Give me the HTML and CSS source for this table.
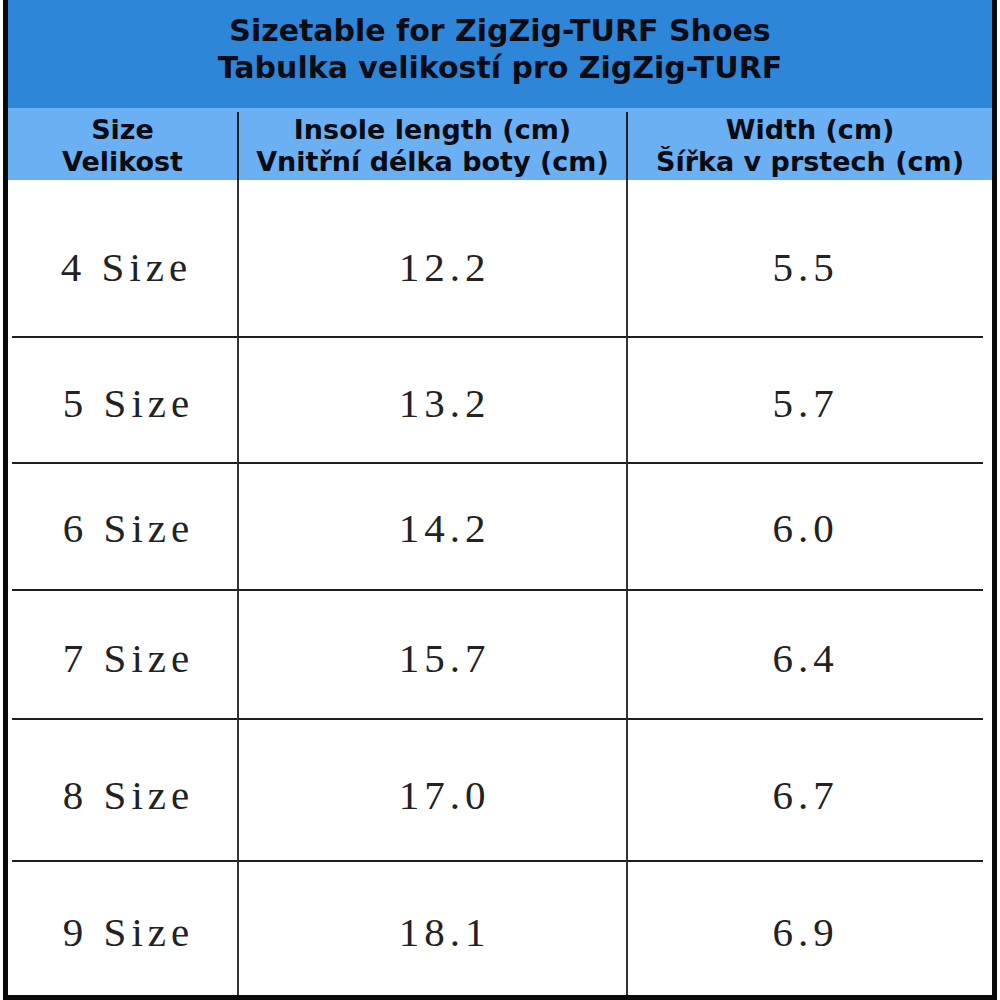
FILE: index.html
```html
<!DOCTYPE html>
<html>
<head>
<meta charset="utf-8">
<link rel="stylesheet" href="styles.css">
</head>
<body>
<div class="frame">
  <div class="title">
    <div>Sizetable for ZigZig-TURF Shoes</div>
    <div>Tabulka velikostí pro ZigZig-TURF</div>
  </div>
  <div class="grid head">
    <div class="hcell c1"><div>Size</div><div>Velikost</div></div>
    <div class="hcell c2"><div>Insole length (cm)</div><div>Vnitřní délka boty (cm)</div></div>
    <div class="hcell c3"><div>Width (cm)</div><div>Šířka v prstech (cm)</div></div>
  </div>
  <div class="grid row r1">
    <div class="cell c1">4 Size</div><div class="cell c2">12.2</div><div class="cell c3">5.5</div>
  </div>
  <div class="grid row r2">
    <div class="cell c1">5 Size</div><div class="cell c2">13.2</div><div class="cell c3">5.7</div>
  </div>
  <div class="grid row r3">
    <div class="cell c1">6 Size</div><div class="cell c2">14.2</div><div class="cell c3">6.0</div>
  </div>
  <div class="grid row r4">
    <div class="cell c1">7 Size</div><div class="cell c2">15.7</div><div class="cell c3">6.4</div>
  </div>
  <div class="grid row r5">
    <div class="cell c1">8 Size</div><div class="cell c2">17.0</div><div class="cell c3">6.7</div>
  </div>
  <div class="grid row r6">
    <div class="cell c1">9 Size</div><div class="cell c2">18.1</div><div class="cell c3">6.9</div>
  </div>
</div>
</body>
</html>
```
FILE: styles.css
```css
html, body {
  margin: 0;
  padding: 0;
  background: #ffffff;
}
.frame {
  margin-left: 3px;
  width: 984px;
  border-left: 5px solid #0a0a0a;
  border-right: 5px solid #0a0a0a;
  border-bottom: 5px solid #0a0a0a;
  background: #ffffff;
}
.title {
  height: 108px;
  box-sizing: border-box;
  padding-top: 12px;
  background: #2e86d8;
  text-align: center;
  font-family: "DejaVu Sans", Verdana, sans-serif;
  font-weight: bold;
  font-size: 30px;
  line-height: 37px;
  color: #0b0b14;
}
.grid {
  display: grid;
  grid-template-columns: 229px 389px 366px;
}
.head {
  height: 72px;
  background: #6ab0f2;
}
.hcell {
  display: flex;
  flex-direction: column;
  justify-content: center;
  align-items: center;
  font-family: "DejaVu Sans", Verdana, sans-serif;
  font-weight: bold;
  font-size: 27px;
  line-height: 32px;
  color: #0b0b14;
  padding-top: 3px;
}
.hcell.c2, .hcell.c3 {
  border-left: 2px solid #222;
  margin-top: 4px;
  padding-top: 0;
}
.row .cell {
  display: flex;
  justify-content: center;
  align-items: center;
  font-family: "Liberation Serif", "Times New Roman", serif;
  font-size: 41px;
  letter-spacing: 5px;
  color: #222222;
  padding-top: 6px;
  box-sizing: border-box;
}
.row .cell.c1 { padding-left: 8px; }
.row .cell.c2, .row .cell.c3 {
  border-left: 2px solid #333;
}
.row .cell.c3 {
  margin-right: 9px;
}
.row + .row .cell {
  border-top: 2px solid #1e1e1e;
}
.row + .row .cell.c1 {
  margin-left: 4px;
}
.row .cell.c2 { padding-left: 24px; }
.r1 { height: 156px; }
.r1 .cell { padding-top: 18px; }
.r2 { height: 126px; }
.r3 { height: 127px; }
.r3 .cell { padding-top: 2px; }
.r4 { height: 129px; }
.r5 { height: 142px; }
.r5 .cell { padding-top: 10px; }
.r6 { height: 135px; }
```
